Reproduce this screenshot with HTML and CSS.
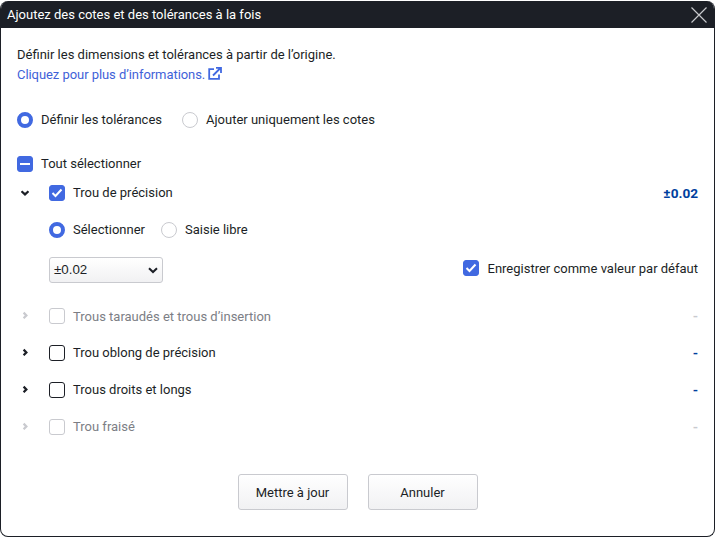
FILE: index.html
```html
<!DOCTYPE html>
<html lang="fr">
<head>
<meta charset="utf-8">
<title>Ajoutez des cotes et des tolérances à la fois</title>
<link rel="stylesheet" href="styles.css">
</head>
<body>
<div class="dialog">
  <header class="titlebar">
    <span class="title">Ajoutez des cotes et des tolérances à la fois</span>
    <svg class="close" width="16" height="16" viewBox="0 0 16 16"><path d="M.5.5l15 15M15.500.5l-15 15" stroke="#c8c9cc" stroke-width="1.200" fill="none"/></svg>
  </header>
  <main class="content">
    <p class="intro">Définir les dimensions et tolérances à partir de l’origine.</p>
    <p class="more"><a class="link">Cliquez pour plus d’informations.</a>
      <svg class="ext" width="14" height="14" viewBox="0 0 14 14"><path d="M6 2.200H1.200v9.600H11V7.500" stroke="#4169e1" stroke-width="1.800" fill="none"/><path d="M5 8.500L12 1.500M8 .9h5v5" stroke="#4169e1" stroke-width="1.800" fill="none"/></svg>
    </p>
    <div class="radios top">
      <label class="opt"><span class="radio on"></span><span class="t">Définir les tolérances</span></label>
      <label class="opt"><span class="radio"></span><span class="t">Ajouter uniquement les cotes</span></label>
    </div>
    <div class="all"><span class="box blue"><svg width="10" height="2" viewBox="0 0 10 2"><path d="M0 1h10" stroke="#fff" stroke-width="2"/></svg></span><span class="t">Tout sélectionner</span></div>
    <div class="row r-first">
      <svg class="chev down" width="10" height="7" viewBox="0 0 10 7"><path d="M1.500 1.200L5 4.400l3.500-3.200" stroke="#1c1f26" stroke-width="2.200" fill="none"/></svg>
      <span class="box blue"><svg width="12" height="10" viewBox="0 0 12 10"><path d="M1.500 5l3 3 6-6.500" stroke="#fff" stroke-width="2" fill="none"/></svg></span>
      <span class="name t">Trou de précision</span>
      <span class="val strong">±0.02</span>
    </div>
    <div class="radios sub">
      <label class="opt"><span class="radio on"></span><span class="t">Sélectionner</span></label>
      <label class="opt"><span class="radio"></span><span class="t">Saisie libre</span></label>
    </div>
    <div class="selrow">
      <div class="select"><span class="sel-value">±0.02</span><svg width="10" height="7" viewBox="0 0 10 7"><path d="M1 1.200L5 5l4-3.800" stroke="#1c1f26" stroke-width="2" fill="none"/></svg></div>
      <label class="save"><span class="box blue"><svg width="12" height="10" viewBox="0 0 12 10"><path d="M1.500 5l3 3 6-6.500" stroke="#fff" stroke-width="2" fill="none"/></svg></span>Enregistrer comme valeur par défaut</label>
    </div>
    <div class="row dis r-list">
      <svg class="chev" width="7" height="10" viewBox="0 0 7 10"><path d="M1.600 1.600l2.800 2.800-2.800 2.800" stroke="#c9cacf" stroke-width="2.200" fill="none"/></svg>
      <span class="box"></span><span class="name">Trous taraudés et trous d’insertion</span><span class="val">-</span>
    </div>
    <div class="row">
      <svg class="chev" width="7" height="10" viewBox="0 0 7 10"><path d="M1.600 1.600l2.800 2.800-2.800 2.800" stroke="#1c1f26" stroke-width="2.200" fill="none"/></svg>
      <span class="box dark"></span><span class="name t">Trou oblong de précision</span><span class="val strong">-</span>
    </div>
    <div class="row">
      <svg class="chev" width="7" height="10" viewBox="0 0 7 10"><path d="M1.600 1.600l2.800 2.800-2.800 2.800" stroke="#1c1f26" stroke-width="2.200" fill="none"/></svg>
      <span class="box dark"></span><span class="name t">Trous droits et longs</span><span class="val strong">-</span>
    </div>
    <div class="row dis">
      <svg class="chev" width="7" height="10" viewBox="0 0 7 10"><path d="M1.600 1.600l2.800 2.800-2.800 2.800" stroke="#c9cacf" stroke-width="2.200" fill="none"/></svg>
      <span class="box"></span><span class="name t">Trou fraisé</span><span class="val">-</span>
    </div>
    <div class="actions">
      <button class="btn">Mettre à jour</button>
      <button class="btn">Annuler</button>
    </div>
  </main>
</div>
</body>
</html>
```
FILE: styles.css
```css
* { box-sizing: border-box; }
html, body { margin: 0; background: #fff; }
body { padding-top: 1px; width: 716px; height: 538px; overflow: hidden; font-family: Roboto, sans-serif; font-size: 13px; color: #1c1f26; }
.dialog { width: 715px; height: 536px; border: 1px solid #1c1f26; border-top: 0; border-radius: 8px; overflow: hidden; display: flex; flex-direction: column; background: #fff; }
.titlebar { height: 27px; margin: 0 -1px; background: #1c1f26; color: #fff; display: flex; align-items: center; justify-content: space-between; padding: 0 8px 0 7px; flex: none; }
.title { font-size: 13px; }
.close { display: block; }
.content { flex: 1; padding: 18px 16px 0 16px; display: flex; flex-direction: column; }
.intro, .more { margin: 0; line-height: 18px; height: 18px; }
.more { margin-top: 2px; display: flex; align-items: center; gap: 3px; }
.link { color: #3f62d8; letter-spacing: -0.06px; }
.ext { margin-bottom: 2px; }
.radios { display: flex; align-items: center; height: 16px; }
.top { margin-top: 28px; gap: 20px; }
.sub { margin-top: 21px; margin-left: 32px; gap: 16px; }
.opt { display: flex; align-items: center; gap: 8px; }
.t { margin-top: -2px; }
.radio { width: 16px; height: 16px; border-radius: 50%; border: 1px solid #c9cacf; background: #fff; flex: none; }
.radio.on { border: 4.500px solid #4169e1; }
.box { width: 16px; height: 16px; border-radius: 3px; border: 1px solid #c9cacf; background: #fff; flex: none; display: flex; align-items: center; justify-content: center; }
.box.blue { background: #4169e1; border-color: #4169e1; }
.box.dark { border-color: #1c1f26; }
.all { display: flex; align-items: center; gap: 8px; margin-top: 28px; height: 16px; }
.row { display: flex; align-items: center; height: 16px; margin-top: 21px; }
.r-first { margin-top: 13px; }
.r-list { margin-top: 25px; }
.row .chev { flex: none; margin-left: 5px; margin-right: 20px; }
.row .chev.down { margin-left: 3px; margin-right: 19px; }
.row .box { margin-right: 8px; }
.name { flex: 1; }
.val { color: #c9cacf; font-weight: 700; font-size: 13.600px; }
.strong { color: #003f9e; }
.dis .name { color: #7c7e85; }
.selrow { display: flex; align-items: center; justify-content: space-between; margin: 19px 0 0 32px; height: 26px; }
.select { width: 114px; height: 26px; border: 1px solid #c9cacf; border-radius: 3px; background: linear-gradient(#fff, #f1f1f3); display: flex; align-items: center; justify-content: space-between; padding: 0 4px; font-family: "Liberation Sans", sans-serif; font-size: 13.330px; }
.sel-value { margin-bottom: 2px; }
.save { display: flex; align-items: center; gap: 9px; margin-bottom: 4px; }
.actions { display: flex; justify-content: center; gap: 20px; margin-top: 39px; }
.btn { width: 110px; height: 36px; border: 1px solid #c9cacf; border-radius: 3px; background: linear-gradient(#fff, #f1f1f3); font: inherit; color: inherit; padding: 0; }
```
